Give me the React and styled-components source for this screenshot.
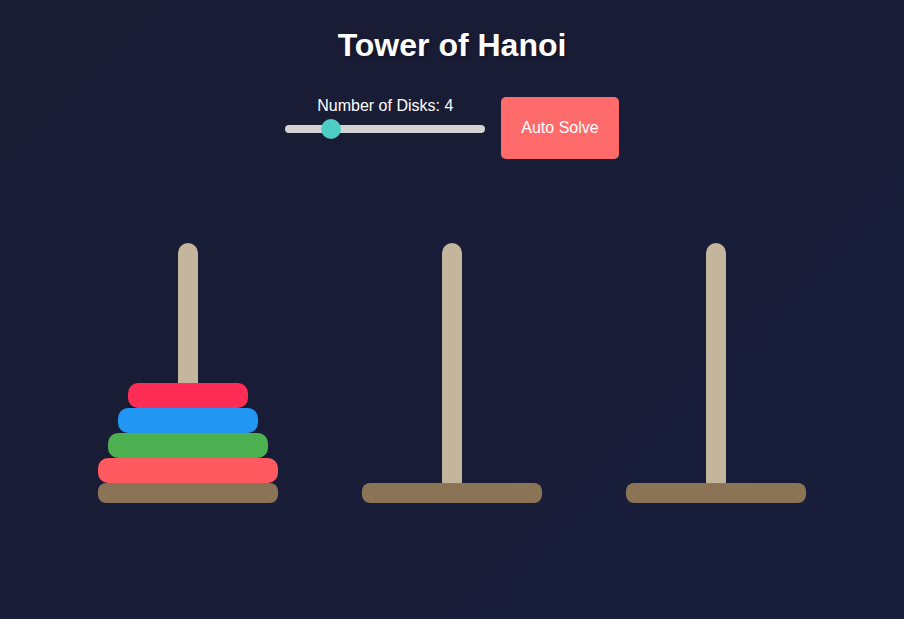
import React, { useState } from "react";
import styled, { createGlobalStyle } from "styled-components";

const GlobalStyle = createGlobalStyle`
  html, body {
    margin: 0;
    padding: 0;
    height: 100%;
  }
  body {
    font-family: "Liberation Sans", Arial, sans-serif;
    background: linear-gradient(135deg, #1a1c33 0%, #171d3a 100%);
    min-height: 619px;
    color: #ffffff;
  }
`;

const Page = styled.div`
  display: flex;
  flex-direction: column;
  align-items: center;
  min-height: 619px;
`;

const Title = styled.h1`
  margin: 27px 0 33px;
  font-size: 32px;
  font-weight: 700;
  line-height: normal;
  color: #ffffff;
  text-shadow: 2px 2px 4px rgba(0, 0, 0, 0.3);
`;

const Controls = styled.div`
  display: flex;
  align-items: flex-start;
  gap: 16px;
`;

const SliderGroup = styled.div`
  display: flex;
  flex-direction: column;
  align-items: center;
  width: 200px;
`;

const Label = styled.label`
  font-size: 16px;
  line-height: normal;
  color: #ffffff;
`;

const Slider = styled.input`
  -webkit-appearance: none;
  appearance: none;
  width: 200px;
  height: 8px;
  margin: 10px 0 0;
  border-radius: 4px;
  background: #d3d3d3;
  outline: none;
  cursor: pointer;

  &::-webkit-slider-thumb {
    -webkit-appearance: none;
    appearance: none;
    width: 20px;
    height: 20px;
    border-radius: 50%;
    background: #4ecdc4;
    border: none;
  }
  &::-moz-range-thumb {
    width: 20px;
    height: 20px;
    border-radius: 50%;
    background: #4ecdc4;
    border: none;
  }
`;

const SolveButton = styled.button`
  padding: 22px 20px;
  font-family: "Liberation Sans", Arial, sans-serif;
  font-size: 16px;
  line-height: normal;
  color: #ffffff;
  background: #ff6b6b;
  border: none;
  border-radius: 5px;
  cursor: pointer;
`;

const Board = styled.div`
  display: flex;
  gap: 84px;
  margin-top: 84px;
`;

const Tower = styled.div`
  position: relative;
  width: 180px;
  height: 260px;
  display: flex;
  flex-direction: column;
  align-items: center;
  justify-content: flex-end;
`;

const Peg = styled.div`
  position: absolute;
  top: 0;
  left: 80px;
  width: 20px;
  height: 250px;
  background: #c4b59d;
  border-radius: 10px 10px 0 0;
`;

const Disk = styled.div`
  position: relative;
  width: ${(p) => p.$width}px;
  height: 25px;
  background: ${(p) => p.$color};
  border-radius: 10px;
`;

const Base = styled.div`
  position: relative;
  width: 180px;
  height: 20px;
  background: #8b7355;
  border-radius: 8px;
`;

const DISK_COLORS = ["#ff2d55", "#2196f3", "#4caf50", "#ff5a5f", "#ffc107", "#9c27b0", "#00bcd4", "#ff9800"];

export default function App() {
  const [count, setCount] = useState(4);
  const towers = [Array.from({ length: count }, (_, i) => i), [], []];

  return (
    <>
      <GlobalStyle />
      <Page>
        <Title>Tower of Hanoi</Title>
        <Controls>
          <SliderGroup>
            <Label htmlFor="disks">Number of Disks: {count}</Label>
            <Slider
              id="disks"
              type="range"
              min={3}
              max={8}
              value={count}
              onChange={(e) => setCount(Number(e.target.value))}
            />
          </SliderGroup>
          <SolveButton>Auto Solve</SolveButton>
        </Controls>
        <Board>
          {towers.map((disks, t) => (
            <Tower key={t}>
              <Peg />
              {disks.map((d) => (
                <Disk key={d} $width={120 + d * 20} $color={DISK_COLORS[d % DISK_COLORS.length]} />
              ))}
              <Base />
            </Tower>
          ))}
        </Board>
      </Page>
    </>
  );
}
